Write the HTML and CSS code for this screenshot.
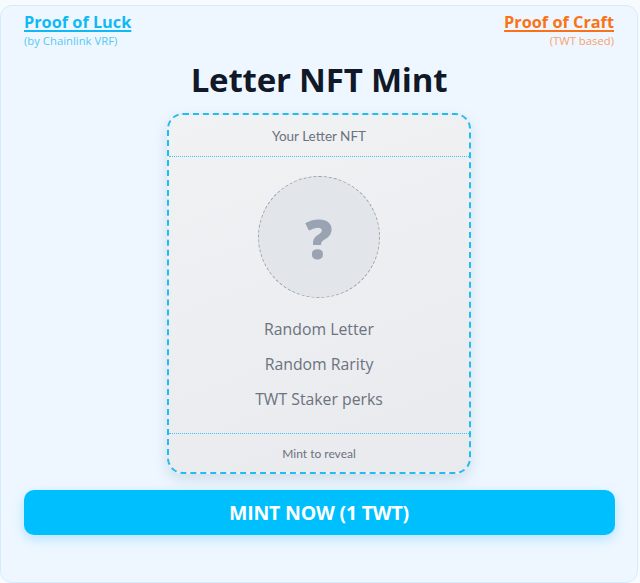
FILE: index.html
```html
<!DOCTYPE html>
<html lang="en">
<head>
<meta charset="utf-8">
<title>Letter NFT Mint</title>
<link rel="stylesheet" href="styles.css">
</head>
<body>
<main class="panel">
  <header class="top">
    <div class="proof proof-luck">
      <a class="proof-link" href="#">Proof of Luck</a>
      <span class="proof-sub">(by Chainlink VRF)</span>
    </div>
    <div class="proof proof-craft">
      <a class="proof-link" href="#">Proof of Craft</a>
      <span class="proof-sub">(TWT based)</span>
    </div>
  </header>
  <h1 class="title">Letter NFT Mint</h1>
  <section class="card">
    <div class="card-head">Your Letter NFT</div>
    <div class="card-body">
      <div class="mystery"><span class="qmark">?</span></div>
      <ul class="traits">
        <li>Random Letter</li>
        <li>Random Rarity</li>
        <li>TWT Staker perks</li>
      </ul>
    </div>
    <div class="card-foot">Mint to reveal</div>
  </section>
  <button class="mint-btn" type="button">MINT NOW (1 TWT)</button>
</main>
</body>
</html>
```

FILE: styles.css
```css
html, body {
  margin: 0;
  padding: 0;
}
body {
  background: #f7fbfe;
  font-family: "Open Sans", "Noto Sans", sans-serif;
  padding-top: 5px;
}
.panel {
  box-sizing: border-box;
  width: 638px;
  height: 578px;
  background: #eef7ff;
  border: 1px solid #d4ecfb;
  border-radius: 12px;
  padding: 6px 23px 0 23px;
  display: flex;
  flex-direction: column;
  align-items: center;
}
.top {
  width: 100%;
  display: flex;
  justify-content: space-between;
}
.proof {
  display: flex;
  flex-direction: column;
}
.proof-craft {
  align-items: flex-end;
}
.proof-link {
  font-family: "Open Sans", sans-serif;
  font-weight: 700;
  font-size: 16.3px;
  line-height: 20px;
  text-decoration: underline;
  text-decoration-thickness: 2px;
  text-underline-offset: 2px;
}
.proof-sub {
  font-size: 11.3px;
  line-height: 15px;
  margin-top: 1px;
}
.proof-luck .proof-link { color: #10b9f5; }
.proof-luck .proof-sub { color: #55c9f5; }
.proof-craft .proof-link { color: #f97316; }
.proof-craft .proof-sub { color: #f7a26a; }
.title {
  margin: 11px 0 0 0;
  font-family: "Open Sans", sans-serif;
  font-weight: 700;
  font-size: 33px;
  line-height: 42px;
  color: #111827;
  letter-spacing: -0.2px;
}
.card {
  box-sizing: border-box;
  margin-top: 12px;
  width: 304px;
  height: 361px;
  border: 2px dashed #22bdf0;
  border-radius: 16px;
  background: linear-gradient(160deg, #f1f2f4 0%, #e9eaed 100%);
  box-shadow: 0 6px 14px rgba(90, 110, 140, 0.18);
  display: flex;
  flex-direction: column;
}
.card-head {
  height: 41px;
  display: flex;
  align-items: center;
  justify-content: center;
  font-family: "Lato", sans-serif;
  font-size: 13.5px;
  color: #6b7280;
  border-bottom: 1px dotted #3cc5f2;
}
.card-body {
  flex: 1;
  display: flex;
  flex-direction: column;
  align-items: center;
  padding-top: 19px;
}
.mystery {
  box-sizing: border-box;
  width: 122px;
  height: 122px;
  border-radius: 50%;
  border: 1.5px dashed #9aa3af;
  background: #e2e5ea;
  display: flex;
  align-items: center;
  justify-content: center;
}
.qmark {
  font-family: "Open Sans", sans-serif;
  font-weight: 800;
  font-size: 54px;
  line-height: 1;
  color: #9aa3b1;
  margin-top: 2px;
}
.traits {
  list-style: none;
  margin: 20px 0 0 0;
  padding: 0;
  display: flex;
  flex-direction: column;
  align-items: center;
  gap: 12px;
}
.traits li {
  font-family: "Open Sans", sans-serif;
  font-size: 15.8px;
  line-height: 23px;
  color: #6b7280;
}
.card-foot {
  height: 38px;
  display: flex;
  align-items: center;
  justify-content: center;
  font-family: "Lato", sans-serif;
  font-size: 12px;
  color: #6b7280;
  border-top: 1px dotted #3cc5f2;
}
.mint-btn {
  margin-top: 16px;
  width: 591px;
  height: 45px;
  border: none;
  border-radius: 10px;
  background: #00bfff;
  color: #ffffff;
  font-family: "Open Sans", sans-serif;
  font-weight: 700;
  font-size: 19.5px;
  letter-spacing: -0.2px;
  box-shadow: 0 4px 12px rgba(0, 170, 255, 0.25);
  cursor: pointer;
}
```
